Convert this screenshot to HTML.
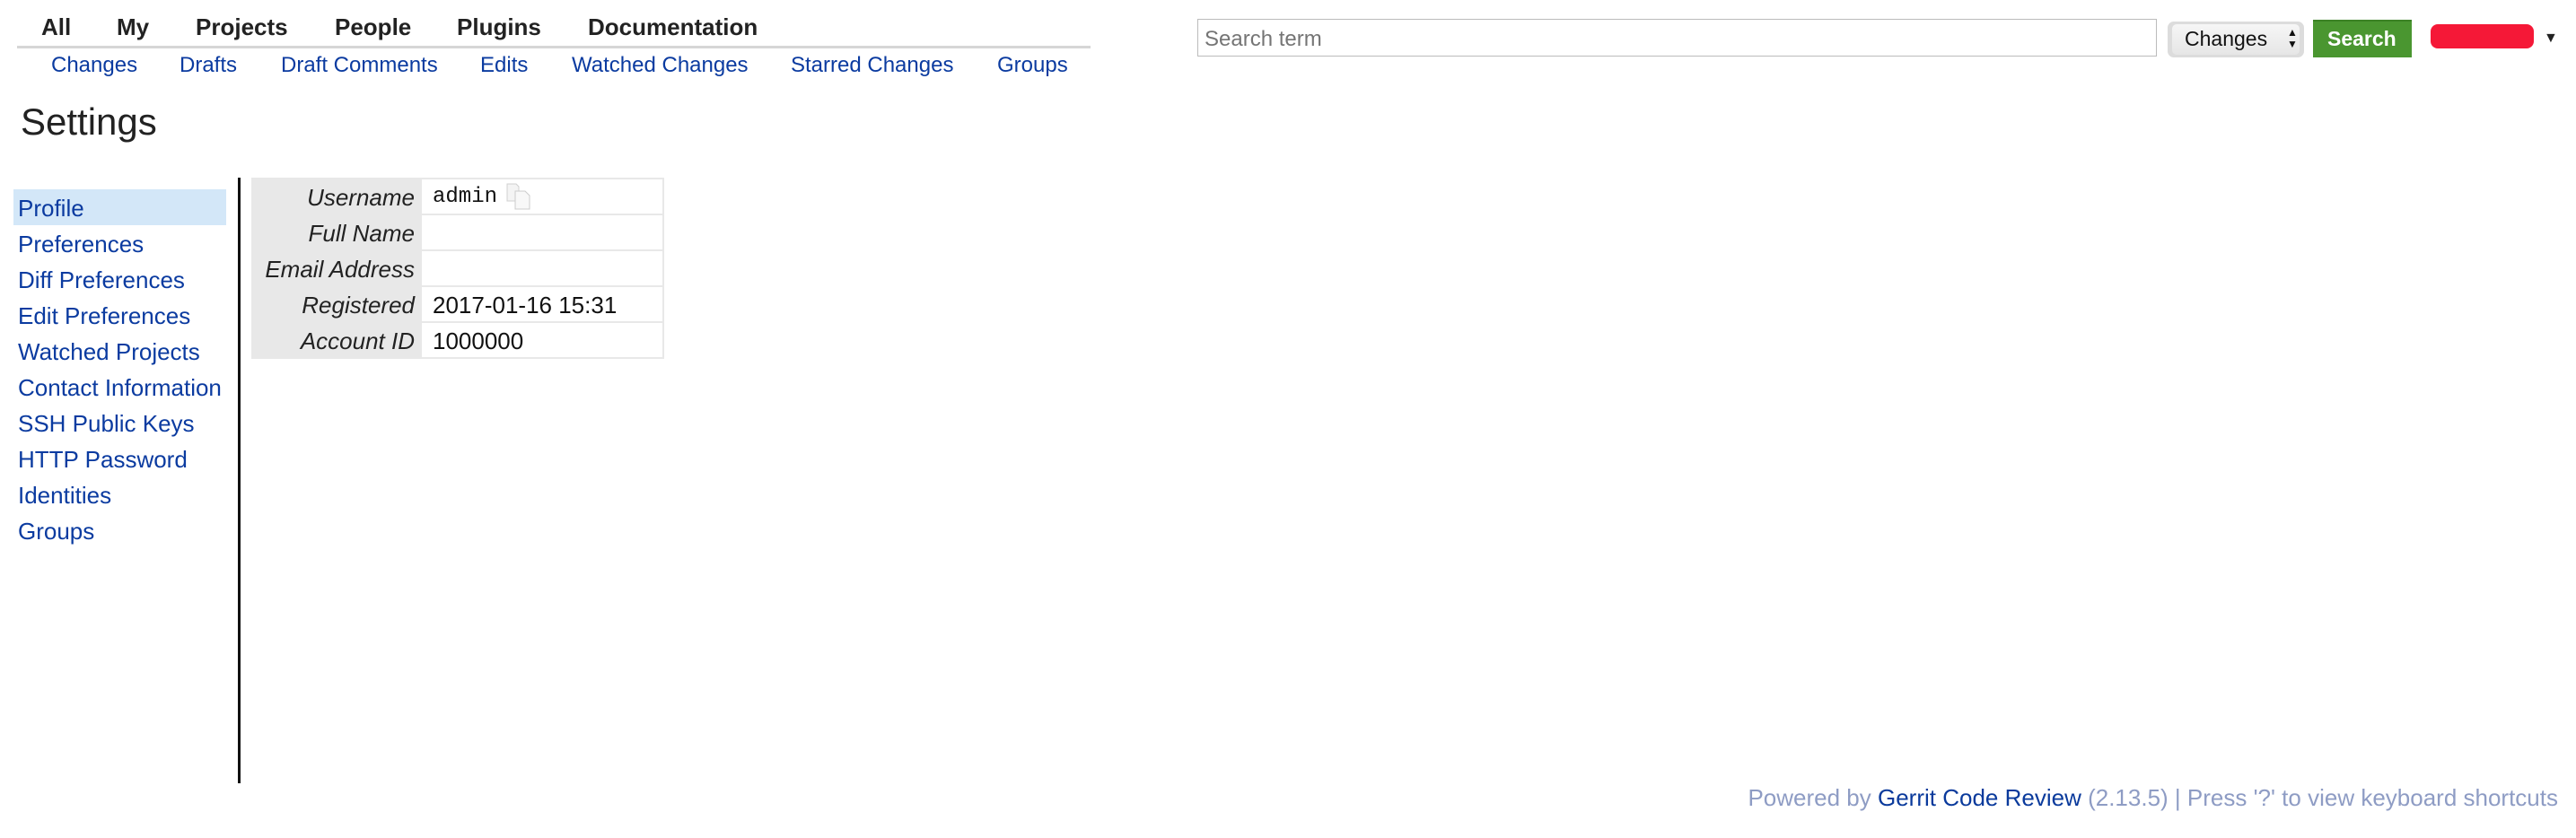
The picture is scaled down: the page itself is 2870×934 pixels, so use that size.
<!DOCTYPE html>
<html><head><meta charset="utf-8"><style>
body{margin:0;width:2870px;height:934px;background:#fff;font-family:"Liberation Sans",Arial,sans-serif;position:relative;overflow:hidden}
.a{position:absolute;white-space:nowrap}
.nav{font-weight:bold;font-size:26px;color:#222;top:15px}
.sub{font-size:24px;color:#0b3ba0;top:59px}
.side{font-size:26px;color:#0b3ba0;left:20px}
.lab{font-style:italic;font-size:26px;color:#222;right:calc(2870px - 462px)}
.val{font-size:26px;color:#111;left:482px}
</style></head><body>
<div class="a nav" style="left:46px">All</div>
<div class="a nav" style="left:130px">My</div>
<div class="a nav" style="left:218px">Projects</div>
<div class="a nav" style="left:373px">People</div>
<div class="a nav" style="left:509px">Plugins</div>
<div class="a nav" style="left:655px">Documentation</div>
<div class="a" style="left:19px;top:51px;width:1196px;height:3px;background:#d6d6d6"></div>
<div class="a sub" style="left:57px">Changes</div>
<div class="a sub" style="left:200px">Drafts</div>
<div class="a sub" style="left:313px">Draft Comments</div>
<div class="a sub" style="left:535px">Edits</div>
<div class="a sub" style="left:637px">Watched Changes</div>
<div class="a sub" style="left:881px">Starred Changes</div>
<div class="a sub" style="left:1111px">Groups</div>
<div class="a" style="left:23px;top:112px;font-size:42px;color:#222">Settings</div>

<div class="a" style="left:1334px;top:21px;width:1067px;height:40px;border:1px solid #bbb;"></div>
<div class="a" style="left:1342px;top:30px;font-size:24px;color:#757575">Search term</div>
<div class="a" style="left:2415px;top:24px;width:152px;height:40px;background:#dcdcdc;border-radius:7px"></div>
<div class="a" style="left:2420px;top:27px;width:142px;height:34px;background:linear-gradient(#f6f6f6,#e6e6e6);border-radius:5px"></div>
<div class="a" style="left:2434px;top:30px;font-size:23px;color:#111">Changes</div>
<div class="a" style="left:2548px;top:30px;font-size:12px;line-height:13px;color:#111">▲<br>▼</div>
<div class="a" style="left:2577px;top:22px;width:110px;height:40px;background:#4a9630;border-top:2px solid #3c8225"></div>
<div class="a" style="left:2593px;top:30px;font-size:23px;font-weight:bold;color:#fff">Search</div>
<div class="a" style="left:2708px;top:27px;width:115px;height:27px;background:#f51837;border-radius:8px"></div>
<div class="a" style="left:2834px;top:34px;font-size:16px;color:#222">▼</div>

<div class="a" style="left:15px;top:211px;width:237px;height:40px;background:#d3e7f8"></div>
<div class="a side" style="top:217px">Profile</div>
<div class="a side" style="top:257px">Preferences</div>
<div class="a side" style="top:297px">Diff Preferences</div>
<div class="a side" style="top:337px">Edit Preferences</div>
<div class="a side" style="top:377px">Watched Projects</div>
<div class="a side" style="top:417px">Contact Information</div>
<div class="a side" style="top:457px">SSH Public Keys</div>
<div class="a side" style="top:497px">HTTP Password</div>
<div class="a side" style="top:537px">Identities</div>
<div class="a side" style="top:577px">Groups</div>
<div class="a" style="left:265px;top:198px;width:3px;height:675px;background:#111"></div>

<div class="a" style="left:280px;top:198px;width:460px;height:202px;background:#e8e8e8"></div>
<div class="a" style="left:470px;top:200px;width:268px;height:38px;background:#fff"></div>
<div class="a" style="left:470px;top:240px;width:268px;height:38px;background:#fff"></div>
<div class="a" style="left:470px;top:280px;width:268px;height:38px;background:#fff"></div>
<div class="a" style="left:470px;top:320px;width:268px;height:38px;background:#fff"></div>
<div class="a" style="left:470px;top:360px;width:268px;height:38px;background:#fff"></div>
<div class="a lab" style="top:205px">Username</div>
<div class="a lab" style="top:245px">Full Name</div>
<div class="a lab" style="top:285px">Email Address</div>
<div class="a lab" style="top:325px">Registered</div>
<div class="a lab" style="top:365px">Account ID</div>
<div class="a val" style="top:206px;font-family:'Liberation Mono',monospace;font-size:24px">admin</div>
<svg class="a" style="left:564px;top:204px" width="30" height="30" viewBox="0 0 30 30"><path d="M1 1h10l3 3v16H1z" fill="#f4f4f4" stroke="#d0d0d0"/><path d="M10 9h11l5 5v15H10z" fill="#f8f8f8" stroke="#ccc"/></svg>
<div class="a val" style="top:325px">2017-01-16 15:31</div>
<div class="a val" style="top:365px">1000000</div>

<div class="a" style="right:20px;top:874px;font-size:26px;color:#8e9cc4">Powered by <span style="color:#0a3a9c">Gerrit Code Review</span> (2.13.5) | Press '?' to view keyboard shortcuts</div>
</body></html>
